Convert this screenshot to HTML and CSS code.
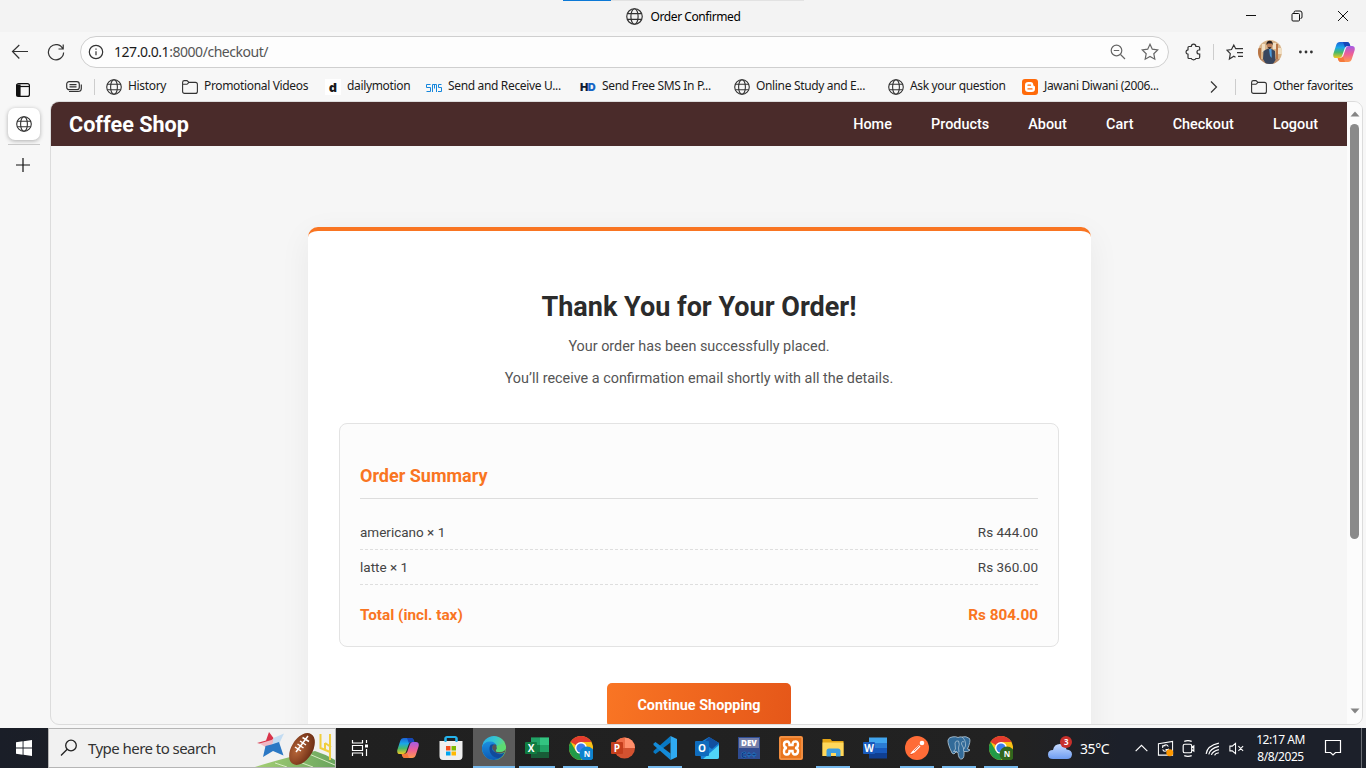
FILE: index.html
```html
<!DOCTYPE html>
<html lang="en">
<head>
<meta charset="utf-8">
<title>Order Confirmed</title>
<link rel="stylesheet" href="styles.css">
</head>
<body>
<svg class="defs" aria-hidden="true">
  <defs>
    <linearGradient id="cpA" x1="0" y1="0" x2="0" y2="1"><stop offset="0" stop-color="#1b62d8"/><stop offset=".35" stop-color="#1aa6e8"/><stop offset=".65" stop-color="#48b96a"/><stop offset="1" stop-color="#f4c81f"/></linearGradient>
    <linearGradient id="cpB" x1="0" y1="0" x2="0" y2="1"><stop offset="0" stop-color="#a45be6"/><stop offset=".5" stop-color="#ee5f96"/><stop offset="1" stop-color="#ff9a4d"/></linearGradient>
    <linearGradient id="edA" x1="0" y1="0" x2="1" y2=".5"><stop offset="0" stop-color="#28a8e8"/><stop offset=".5" stop-color="#35c7d0"/><stop offset="1" stop-color="#70e05a"/></linearGradient>
    <linearGradient id="edB" x1="0" y1="0" x2="0" y2="1"><stop offset="0" stop-color="#1b8ede"/><stop offset="1" stop-color="#0d5ab5"/></linearGradient>
    <linearGradient id="cloudG" x1="0" y1="0" x2="0" y2="1"><stop offset="0" stop-color="#c6dbff"/><stop offset="1" stop-color="#6e9cf0"/></linearGradient>
    <radialGradient id="ballG" cx=".4" cy=".35" r=".7"><stop offset="0" stop-color="#b9683a"/><stop offset="1" stop-color="#6b2c14"/></radialGradient>
    <linearGradient id="fieldG" x1="0" y1="0" x2="1" y2="0"><stop offset="0" stop-color="#a4cf74"/><stop offset="1" stop-color="#6aa55e"/></linearGradient>
    <symbol id="globe" viewBox="0 0 16 16"><g fill="none" stroke="currentColor" stroke-width="1.1"><circle cx="8" cy="8" r="7.3"/><ellipse cx="8" cy="8" rx="3.4" ry="7.3"/><path d="M1.3 5.3h13.4M1.3 10.7h13.4"/></g></symbol>
    <symbol id="folder" viewBox="0 0 16 16"><path d="M.6 4V3.4Q.6 1.6 2.4 1.6H5L7 3.4H13.4Q15.4 3.4 15.4 5.4V12.4Q15.4 14.4 13.4 14.4H2.6Q.6 14.4 .6 12.4ZM.8 5.3H5L7 3.4" fill="none" stroke="currentColor" stroke-width="1.1"/></symbol>
    <symbol id="copilot" viewBox="0 0 22 20"><path d="M7 0H14Q16 0 16.7 2L17.3 4H14.5Q12.5 4 11.8 6L9 14Q8.300 16 6.300 16H3Q-.3 16 .3 12L3.200 3Q4 0 7 0Z" fill="url(#cpA)"/><path d="M15 20H8Q6 20 5.300 18L4.700 16H7.500Q9.500 16 10.200 14L13 6Q13.700 4 15.700 4H19Q22.300 4 21.700 8L18.800 17Q18 20 15 20Z" fill="url(#cpB)"/><path d="M10 0H14Q16 0 16.700 2L17.300 4H14.500Q12.800 4 12 5.400Z" fill="#1646b8"/><path d="M4.700 16H7.500Q9.200 16 10 14.600L12 20H8Q6 20 5.300 18Z" fill="#f5793b"/></symbol>
    <symbol id="chrome" viewBox="0 0 24 24"><circle cx="12" cy="12" r="12" fill="#fbc116"/><path d="M12 12L1.600 6A12 12 0 0 1 22.400 6Z" fill="#e33b2e"/><path d="M12 24A12 12 0 0 1 1.600 6L6.800 15 12 17.500 16 15Z" fill="#229a48"/><path d="M12 6H22.400L17 15Z" fill="#fbc116"/><circle cx="12" cy="12" r="6" fill="#fff"/><circle cx="12" cy="12" r="4.600" fill="#3b7ded"/></symbol>
  </defs>
</svg>

<div class="screen">
  <header class="titlebar">
    <div class="loadbar"></div>
    <div class="tab-title"><svg class="i16"><use href="#globe"/></svg><span class="tt">Order Confirmed</span></div>
    <div class="win-btns">
      <svg viewBox="0 0 12 12"><path d="M1 5.500H11" /></svg>
      <svg viewBox="0 0 12 12"><path d="M3 3V2.500Q3 1 4.500 1H9Q11 1 11 3V7Q11 8.500 9.500 8.500M2 3.500H7.500Q8.500 3.500 8.500 4.500V10Q8.500 11 7.500 11H2Q1 11 1 10V4.500Q1 3.500 2 3.500"/></svg>
      <svg viewBox="0 0 12 12"><path d="M1 1L11 11M11 1L1 11"/></svg>
    </div>
  </header>

  <div class="toolbar">
    <svg class="back" viewBox="0 0 18 16"><path d="M17 7.500H1.500M8.300 1L1.500 7.500 8.300 14.500"/></svg>
    <svg class="reload" viewBox="0 0 18 18"><path d="M15.900 6A7.600 7.600 0 1 0 16.600 9.500M16.200 1.500V6H11.500"/></svg>
    <div class="address">
      <svg class="info" viewBox="0 0 16 16"><circle cx="8" cy="8" r="6.700"/><path d="M8 7.200V11.200M8 4.600V5.800"/></svg>
      <span class="url">127.0.0.1<span class="dim">:8000/checkout/</span></span>
      <svg class="mag" viewBox="0 0 16 16"><circle cx="6.500" cy="6.500" r="5.300"/><path d="M10.500 10.500L15 15M3.800 6.500H9.200"/></svg>
      <svg class="fav" viewBox="0 0 18 18"><path d="M9 1.300L11.300 6.200 16.700 6.900 12.800 10.700 13.800 16.200 9 13.500 4.200 16.200 5.200 10.700 1.300 6.900 6.700 6.200Z"/></svg>
    </div>
    <svg class="puzzle" viewBox="0 0 18 18"><path d="M4 3.500H6.300Q6.500 1.200 8.600 1.200T10.900 3.500H13.200Q14.700 3.500 14.700 5V7H14Q12 7 12 9T14 11H14.700V14Q14.700 15.500 13.200 15.500H10.900Q10.700 16.800 8.600 16.800T6.300 15.500H4Q3 15.500 3 14.500V11.200Q1 11 1 9T3 6.800V4.500Q3 3.500 4 3.500Z"/></svg>
    <i class="vsep"></i>
    <svg class="favlist" viewBox="0 0 18 18"><path d="M9.500 14.200L7.800 13.300 3.400 16 4.300 10.700 1 7.200 5.500 6.500 7.800 2 9.700 5.700H17M11 9.600H17M12 13.400H17"/></svg>
    <svg class="avatar" viewBox="0 0 24 24"><defs><clipPath id="av"><circle cx="12" cy="12" r="12"/></clipPath></defs><g clip-path="url(#av)"><path fill="#d9b58a" d="M0 0H24V24H0Z"/><path fill="#b87545" d="M0 8H3V24H0ZM18 4H20V20H18Z"/><path fill="#f1dfc4" d="M4 4H7V12H4ZM20 8H24V14H20ZM15 3H18V9H15Z"/><path fill="#b98a68" d="M0 19H24V24H0Z"/><path fill="#39465e" d="M5.500 11L10 8.500H13L17 11 17.500 20 15 24H8L5 19Z"/><path fill="#4c9bdb" d="M11 9H13.500L13.800 18 12 16Z"/><circle cx="11.600" cy="5.500" r="2.700" fill="#bd805a"/><path fill="#28201e" d="M8.500 5Q8 1 11.500.7T14.700 5L13.500 3.500H10ZM9.500 7.200H13.700L11.600 9Z"/></g></svg>
    <svg class="dots" viewBox="0 0 16 4"><circle cx="2.400" cy="2" r="1.400"/><circle cx="8" cy="2" r="1.400"/><circle cx="13.400" cy="2" r="1.400"/></svg>
    <svg class="cop"><use href="#copilot"/></svg>
  </div>

  <div class="browser-body">
    <aside class="vtabs">
      <svg class="panel" viewBox="0 0 16 16"><rect x="1.600" y="1.600" width="12.800" height="12.800" rx="2"/><path d="M2 4.500H14" /><path d="M2 3H5V14H2Z" class="fill"/></svg>
      <div class="vtab"><svg class="i16"><use href="#globe"/></svg></div>
      <i class="hsep"></i>
      <svg class="plus" viewBox="0 0 16 16"><path d="M8 1V15M1 8H15"/></svg>
    </aside>
    <div class="main">
      <nav class="bookmarks">
        <svg class="tray" viewBox="0 0 18 14"><rect x="1.700" y="1.700" width="12.600" height="8" rx="2.500"/><path d="M4.500 4.700H11.500M4.500 6.900H11.500M4 11.500H13Q16.300 11.500 16.300 8.500V4.500"/></svg>
        <i class="vsep bsep"></i>
        <a class="bm w76"><svg class="i16"><use href="#globe"/></svg><span>History</span></a>
        <a class="bm w143"><svg class="i16"><use href="#folder"/></svg><span>Promotional Videos</span></a>
        <a class="bm w101"><b class="dm">d</b><span>dailymotion</span></a>
        <a class="bm w154"><svg class="i16" viewBox="0 0 16 16"><path d="M4.500 5.500H.5V8.500H4.500V12.500H.5M6.500 13V5.500H10.500V13M8.500 5.500V9.500M15.500 5.500H12.500V8.500H15.500V12.500H12" fill="none" stroke="#1687dc"/></svg><span>Send and Receive U...</span></a>
        <a class="bm w154"><b class="hd">H<em>D</em></b><span>Send Free SMS In P...</span></a>
        <a class="bm w154"><svg class="i16"><use href="#globe"/></svg><span>Online Study and E...</span></a>
        <a class="bm w134"><svg class="i16"><use href="#globe"/></svg><span>Ask your question</span></a>
        <a class="bm w188"><svg class="i16" viewBox="0 0 16 16"><rect width="16" height="16" rx="3" fill="#ff6a0a"/><path d="M6.300 3H8.500Q11.300 3 11.300 6 11.500 7 12.300 7 13 7.200 13 8V9.700Q13 13 9.700 13H6.300Q3 13 3 9.700V6.300Q3 3 6.300 3Z" fill="#fff"/><path d="M6 6.200H8.500M6 9.900H10" stroke="#ff6a0a" stroke-width="1.300" stroke-linecap="round"/></svg><span>Jawani Diwani (2006...</span></a>
        <svg class="chev" viewBox="0 0 8 14"><path d="M1 1.500L6.500 7 1 12.500"/></svg>
        <i class="vsep csep"></i>
        <a class="bm"><svg class="i16"><use href="#folder"/></svg><span>Other favorites</span></a>
      </nav>

      <div class="viewport">
        <div class="page">
          <div class="shopbar">
            <div class="brand">Coffee Shop</div>
            <nav class="links"><a>Home</a><a>Products</a><a>About</a><a>Cart</a><a>Checkout</a><a>Logout</a></nav>
          </div>
          <section class="card">
            <h1>Thank You for Your Order!</h1>
            <p>Your order has been successfully placed.</p>
            <p>You’ll receive a confirmation email shortly with all the details.</p>
            <div class="summary">
              <h2>Order Summary</h2>
              <div class="row"><span>americano × 1</span><span>Rs 444.00</span></div>
              <div class="row"><span>latte × 1</span><span>Rs 360.00</span></div>
              <div class="total"><span>Total (incl. tax)</span><span>Rs 804.00</span></div>
            </div>
            <a class="btn">Continue Shopping</a>
          </section>
        </div>
        <div class="scroll">
          <svg viewBox="0 0 10 6"><path d="M5 .5L9.500 5.500H.5Z"/></svg>
          <i class="thumb"></i>
          <svg class="down" viewBox="0 0 10 6"><path d="M5 5.500L9.500 .5H.5Z"/></svg>
        </div>
      </div>
    </div>
  </div>

  <footer class="taskbar">
    <div class="start"><svg viewBox="0 0 16 16"><path d="M0 2.300L6.600 1.300V7.500H0ZM7.500 1.200L16 0V7.500H7.500ZM0 8.500H6.600V14.700L0 13.700ZM7.500 8.500H16V16L7.500 14.800Z" fill="#fff"/></svg></div>
    <div class="search">
      <svg class="lens" viewBox="0 0 18 18"><circle cx="11" cy="6.500" r="5.300"/><path d="M7.200 10.300L1 16.500"/></svg>
      <span>Type here to search</span>
      <svg class="sport" viewBox="0 0 80 38"><path d="M0 38Q25 30 60 22Q70 25 80 31V38Z" fill="url(#fieldG)"/><path d="M20 34L32 38M36 30L58 38M54 25L80 36" stroke="#d6ebc0" stroke-width="1"/><path d="M14 3L18.500 9 16.500 17 2 14 11 11.500Z" fill="#d8344a"/><path d="M18.500 9L29 4.500 24 15 16.500 17Z" fill="#c3dcf2"/><path d="M4.500 14.500L16.500 11 18.500 9.500 17 16 10.500 18Z" fill="#f0b9c4"/><path d="M24 13L28.500 26.500 18 22 8 28 10.500 17 16.500 15.500Z" fill="#2b78c4"/><ellipse cx="47" cy="20" rx="17.500" ry="10.500" transform="rotate(-58 47 20)" fill="url(#ballG)"/><path d="M41 23L53 7M40 18L46 22M42.500 15L48.500 19M45 12L51 16M47.500 8.500L54 12.500" stroke="#fff" stroke-width="1.500"/><path d="M65.500 5V19L75 23M70 14V21M75 5V31M70 14L76 18" fill="none" stroke="#f0ce3e" stroke-width="2"/></svg>
    </div>
    <div class="view"><svg viewBox="0 0 18 18"><path d="M1.500 1V4H11.500V1M1.500 6.500H11.500V11.500H1.500ZM1.500 17V14H11.500V17M15.500 1V4M15.500 10V17"/><path d="M14 5.500H17V8.500H14Z" class="w"/></svg></div>
    <div class="apps">
      <div class="app a43"><svg class="cpbig"><use href="#copilot"/></svg></div>
      <div class="app a43"><svg viewBox="0 0 24 24"><path d="M6.500 7V2.500Q6.500 1 8 1H16Q17.500 1 17.500 2.500V7" fill="none" stroke="#25b4ed" stroke-width="2"/><path d="M.5 5H23.500V20Q23.500 24 20 24H4Q.5 24 .5 20Z" fill="#efefef"/><path d="M6.500 1.500V6M17.500 1.500V6" stroke="#25b4ed" stroke-width="2"/><path d="M7 10H11.500V14.500H7Z" fill="#f25022"/><path d="M12.500 10H17V14.500H12.500Z" fill="#7fba00"/><path d="M7 15.500H11.500V19.500H7Z" fill="#00a4ef"/><path d="M12.500 15.500H17V19.500H12.500Z" fill="#ffb900"/></svg></div>
      <div class="app active"><svg viewBox="0 0 24 24"><circle cx="12" cy="12" r="12" fill="url(#edA)"/><path d="M0 11Q2 5.500 8 5.500Q14 5.500 15 11Q15 13 13.800 14.300Q13 16 16 17Q19.500 18 22.800 16.500Q19 24 12 24A12 12 0 0 1 0 11Z" fill="url(#edB)"/><path d="M8.500 9Q6 13 9 18Q11.500 22 17 22Q20 21 22.800 16.500Q17 20 13.800 16.500Q9.500 15 10 11.500Q10.500 9.300 12.300 8.500Q10 8 8.500 9Z" fill="#114a9a"/><path d="M13.900 14.200Q15.300 12.500 14.800 10.500Q14 8 12.300 8.400Q10.500 9 10.100 11Q9.900 13.500 12.500 15.600Q14 17.500 18 17.600L22.900 16.300L24 12Q23 15.500 18 15.800Q13 15.800 13.900 14.200Z" fill="#555"/><path d="M14.500 10Q15.500 13 14 14.400Q14 16 18 15.900Q23.500 15.500 24 11L20 8Z" fill="#5bdc72"/></svg></div>
      <div class="app a44 on"><svg viewBox="0 0 24 24"><path d="M6 1.500H24V22H6Z" fill="#185c37"/><path d="M6 1.500H15V9H6Z" fill="#21a366"/><path d="M15 1.500H24V9H15Z" fill="#33c481"/><path d="M15 9H24V16H15Z" fill="#21a366"/><path d="M6 9H15V16H6Z" fill="#107c41"/><rect y="6" width="12" height="12" rx="1" fill="#107c41"/><text x="6" y="15.500" class="tile">X</text></svg></div>
      <div class="app a43 on"><svg viewBox="0 0 24 24"><use href="#chrome" width="24" height="24"/><circle cx="18" cy="18" r="7.500" fill="#0d83ce"/><text x="18" y="21" class="pn">N</text></svg></div>
      <div class="app"><svg viewBox="0 0 24 24"><circle cx="13.500" cy="12" r="10.500" fill="#d35230"/><path d="M13.500 1.500A10.500 10.500 0 0 1 24 12H13.500Z" fill="#ff8f6b"/><path d="M13.500 1.500V12H3A10.500 10.500 0 0 1 13.500 1.500" fill="#ed6c47"/><rect y="6" width="12" height="12" rx="1" fill="#c43e1c"/><text x="6" y="15.500" class="tile">P</text></svg></div>
      <div class="app on"><svg viewBox="0 0 24 24"><path d="M17.500 6.500L2.500 18 .5 16.500V15L17.500 0Z" fill="#0879c4"/><path d="M17.500 17.500L2.500 6 .5 7.500V9L17.500 24Z" fill="#148bd8"/><path d="M17.500 0L24 3V21L17.500 24Z" fill="#2faaf2"/></svg></div>
      <div class="app"><svg viewBox="0 0 24 24"><path d="M4 7L14 1 24 7V21Q24 23 22 23H6Z" fill="#1683d8"/><path d="M14 1L24 7 17 13 8 7Z" fill="#124f9f"/><path d="M24 9V21Q24 23 22 23H8Z" fill="#50d4f6"/><rect y="5" width="14" height="15" rx="1" fill="#0f6cbd"/><text x="7" y="16" class="tile">O</text></svg></div>
      <div class="app"><svg viewBox="0 0 24 24"><path d="M1 1H23V23H1Z" fill="#2e4b91"/><path d="M2 2H22V12H2Z" fill="#747fa8"/><text x="12" y="10" class="dev">DEV</text><text x="12" y="22" class="cpp">C++</text></svg></div>
      <div class="app"><svg viewBox="0 0 24 24"><rect width="24" height="24" rx="2" fill="#e9751d"/><rect x="1" y="1" width="22" height="22" rx="1" fill="none" stroke="#f7a664"/><path d="M8 5.500Q5 5.500 5 8.500T8 12Q5 12 5 15.500T8 18.500Q10.500 18.500 10.500 15H13.500Q13.500 18.500 16 18.500T19 15.500T16 12Q19 12 19 8.500T16 5.500Q13.500 5.500 13.500 9H10.500Q10.500 5.500 8 5.500Z" fill="none" stroke="#fff" stroke-width="2.400"/></svg></div>
      <div class="app on"><svg viewBox="0 0 24 24"><path d="M1.500 3H9.500L11 5H22.500V20H1.500Z" fill="#e5a515"/><path d="M1.500 6.500H22.500V20H1.500Z" fill="#ffd85c"/><path d="M5.500 20V15Q5.500 12.500 8 12.500H17Q19.500 12.500 19.500 15V20.500H15V17H10V20.500H5.500Z" fill="#3d9de0"/></svg></div>
      <div class="app"><svg viewBox="0 0 24 24"><path d="M6 1.500H24V7H6Z" fill="#41a5ee"/><path d="M6 7H24V12H6Z" fill="#2b7cd3"/><path d="M6 12H24V17H6Z" fill="#185abd"/><path d="M6 17H24V22.500H6Z" fill="#103f91"/><rect y="6" width="12" height="12" rx="1" fill="#185abd"/><text x="6" y="15.500" class="tile">W</text></svg></div>
      <div class="app on"><svg viewBox="0 0 24 24"><circle cx="12" cy="12" r="12" fill="#ff6c37"/><path d="M5 18.500L7 15.500 14 9 15.500 10.500 9.500 16.500Z" fill="#fff"/><circle cx="17" cy="7" r="2.300" fill="#fff"/><path d="M9 15L14.500 9.500M5 18.500H8" stroke="#d9481e" stroke-width=".7"/></svg></div>
      <div class="app on"><svg viewBox="0 0 24 24"><path d="M6 .8Q9 .3 11 1.500Q13 .5 15 1Q19-.3 22.500 2.500Q24 5 20.500 13L23 14Q21 16.500 17 15.500Q17.500 22 15 23Q11.500 24 11 16.500L9 16Q7 19.500 5 17Q.5 8 1 4Q2 .8 6 .8Z" fill="#326b99" stroke="#b9ccd9" stroke-width=".8"/><path d="M8 7Q9 4 11.500 5Q13 8 11.500 12L12 16M8 7L8.500 13 6.500 15.500H10M15 1Q19 4 18.500 10L17 13M17 6Q14.500 4.500 14.500 8L16.500 12V15.500" fill="none" stroke="#b9ccd9" stroke-width=".7"/></svg></div>
      <div class="app on"><svg viewBox="0 0 24 24"><use href="#chrome" width="24" height="24"/><circle cx="18" cy="18" r="7.500" fill="#32671d"/><text x="18" y="21" class="pn">N</text></svg></div>
    </div>
    <div class="weather"><svg viewBox="0 0 26 26"><path d="M6 24Q1 24 1 19.500T6 15Q7 9 13 9Q18.500 9 19.500 14.500Q25 15 25 19.500Q24.500 24 20 24Z" fill="url(#cloudG)"/><circle cx="19" cy="7" r="6" fill="#c8302b"/><text x="19" y="10" class="pn">3</text></svg><span>35°C</span></div>
    <div class="tray-icons">
      <svg viewBox="0 0 16 16"><path d="M2.500 10.500L8 5 13.500 10.500"/></svg>
      <svg viewBox="0 0 18 18"><path d="M1.500 4L16.500 1.500V16H1.500ZM9 6H6V8.500M6 7Q10 3 12 7M6 10Q8 14 12 10V12M12 10H9"/><circle cx="13.500" cy="13.500" r="3.700" class="or"/></svg>
      <svg viewBox="0 0 16 16"><path d="M4.500 4H9.500Q11 4 11 5.500V10.500Q11 12 9.500 12H4.500Q3 12 3 10.500V5.500Q3 4 4.500 4ZM11 7L13 5.500V10.500L11 9M4 1.300Q7.500-.2 11 1.300M4 14.700Q7.500 16.200 11 14.700"/></svg>
      <svg viewBox="0 0 16 16"><path d="M2 13Q3 5.500 14 3M4.500 13.500Q5.500 8 14 6M7 14Q8 10.500 14 9M10 14.500Q10.500 12.500 14 12"/></svg>
      <svg viewBox="0 0 18 18"><path d="M2 6.500H4.500L8 3.500V14.500L4.500 11.500H2ZM11 6.500L16 11.500M16 6.500L11 11.500"/></svg>
    </div>
    <div class="clock"><span>12:17 AM</span><span>8/8/2025</span></div>
    <svg class="notif" viewBox="0 0 18 18"><path d="M1.500 1.500H16.500V13.500H11.500L9 16 6.500 13.500H1.500Z"/></svg>
    <i class="peek"></i>
  </footer>
</div>
</body>
</html>
```

FILE: styles.css
```css
* { box-sizing: border-box; }
body { margin: 0; font-family: "Noto Sans", "Open Sans", sans-serif; color: #1b1b1b; overflow: hidden; }
svg { display: block; flex: none; }
i { display: block; flex: none; }
.defs { position: absolute; width: 0; height: 0; }
.i16 { width: 16px; height: 16px; color: #333; }
.screen { width: 1366px; height: 768px; display: flex; flex-direction: column; background: #f7f7f7; }

.titlebar { height: 32px; background: #f3f3f3; position: relative; display: flex; justify-content: center; align-items: center; }
.loadbar { position: absolute; left: 563px; top: 0; width: 241px; height: 1px; background: linear-gradient(90deg, #0b78d6 48px, #e2e2e2 48px); }
.tab-title { display: flex; gap: 8px; align-items: center; font-size: 12px; color: #000; letter-spacing: -.42px; }
.tab-title svg { width: 17px; height: 17px; }
.win-btns { position: absolute; right: 17px; top: 10px; display: flex; gap: 34px; }
.win-btns svg { width: 12px; height: 12px; fill: none; stroke: #111; stroke-width: 1; }

.toolbar { height: 40px; display: flex; align-items: center; padding-left: 11px; }
.toolbar svg { fill: none; stroke: #333; stroke-width: 1.2; }
.back { width: 18px; height: 16px; }
.reload { width: 18px; height: 18px; margin-left: 18px; }
.address { width: 1089px; height: 32px; margin-left: 15px; border: 1px solid #cfcfcf; border-radius: 16px; background: #fdfdfd; display: flex; align-items: center; padding: 0 9px 0 7px; }
.address .info { width: 16px; height: 16px; }
.address .mag { width: 16px; height: 16px; margin-left: auto; stroke: #666; }
.address .fav { width: 18px; height: 18px; margin-left: 15px; stroke: #666; }
.url { margin-left: 10px; font-size: 14px; line-height: 20px; letter-spacing: -0.46px; }
.dim { color: #555; }
.toolbar .puzzle { width: 18px; height: 18px; margin-left: 16px; }
.vsep { width: 1px; height: 16px; background: #cdcdcd; }
.toolbar .vsep { margin-left: 10px; }
.toolbar .favlist { width: 18px; height: 18px; margin-left: 12px; }
.toolbar .avatar { width: 24px; height: 24px; margin-left: 14px; stroke: none; }
.toolbar .dots { width: 16px; height: 4px; margin-left: 16px; fill: #333; stroke: none; }
.toolbar .cop { width: 22px; height: 20px; margin-left: 19px; stroke: none; }

.browser-body { height: 656px; display: flex; }
.vtabs { width: 50px; display: flex; flex-direction: column; align-items: center; padding: 10px 4px 0 0; }
.vtabs svg { stroke: #111; fill: none; stroke-width: 1.2; }
.panel { width: 16px; height: 16px; }
.vtabs .panel .fill { fill: #111; }
.vtab { width: 32px; height: 32px; margin: 10px 0 0 2px; background: #fff; border-radius: 7px; box-shadow: 0 1px 4px rgba(0,0,0,.3); display: flex; align-items: center; justify-content: center; }
.vtab svg { stroke: none; }
.hsep { width: 32px; height: 1px; margin: 4px 0 0 2px; background: #c9c9c9; }
.plus { width: 16px; height: 16px; margin-top: 12px; }
.main { width: 1316px; display: flex; flex-direction: column; }

.bookmarks { height: 29px; display: flex; align-items: center; padding-left: 15px; }
.tray { width: 18px; height: 14px; fill: none; stroke: #333; stroke-width: 1.2; }
.bsep { margin: 0 11px; }
.bm { display: flex; align-items: center; gap: 6px; font-size: 12px; line-height: 16px; white-space: nowrap; flex: none; }
.bm span { letter-spacing: -.34px; margin-top: -1px; }
.w76 { width: 76px; } .w143 { width: 143px; } .w101 { width: 101px; } .w154 { width: 154px; } .w134 { width: 134px; } .w188 { width: 188px; }
.dm { width: 16px; height: 16px; background: #fff; font: 900 13px/16px "Open Sans", sans-serif; text-align: center; }
.hd { width: 16px; font: 900 11px/16px "Inter", sans-serif; letter-spacing: -.5px; color: #111b33; }
.hd em { color: #1666c5; font-style: normal; }
.chev { width: 8px; height: 14px; fill: none; stroke: #333; stroke-width: 1.2; }
.csep { margin: 0 15px 0 17px; }

.viewport { height: 624px; border: 1px solid #dcdcdc; border-radius: 9px; overflow: hidden; width: 1313px; display: flex; background: #f6f6f6; }
.page { width: 1296px; font-family: Roboto, sans-serif; display: flex; flex-direction: column; align-items: center; flex: none; overflow: hidden; }
.shopbar { width: 100%; height: 44px; background: #4a2b2a; display: flex; justify-content: space-between; align-items: center; padding: 0 29px 0 18px; flex: none; color: #fff; }
.brand { font-size: 21.600px; font-weight: 700; }
.links { display: flex; gap: 39.200px; font-size: 14.400px; font-weight: 500; }
.card { width: 783px; height: 560px; margin-top: 81px; padding: 59px 31px 0; background: #fff; border-top: 4px solid #f97522; border-radius: 10px; box-shadow: 0 8px 32px rgba(0,0,0,.06); display: flex; flex-direction: column; align-items: center; flex: none; }
.card h1 { margin: 0; font-size: 27px; line-height: 34px; color: #2b2b2b; }
.card p { margin: 11px 0 0; font-size: 14.400px; line-height: 21px; color: #555; }
.card h1 + p { margin-top: 12px; }
.summary { width: 720px; height: 224px; margin-top: 34px; border: 1px solid #e3e3e3; border-radius: 8px; background: #fcfcfc; padding: 40px 20px 0; }
.summary h2 { margin: 0 0 16px; height: 35px; font-size: 18px; line-height: 24px; color: #f97522; border-bottom: 1px solid #ddd; }
.row { height: 35px; display: flex; justify-content: space-between; align-items: center; border-bottom: 1px dashed #dedede; font-size: 13.500px; color: #444; }
.total { margin-top: 20px; display: flex; justify-content: space-between; font-size: 15.300px; font-weight: 700; line-height: 20px; color: #f97522; }
.btn { width: 184px; height: 44px; margin-top: 36px; border-radius: 5px; background: linear-gradient(100deg, #f97524, #e55719); color: #fff; font-size: 14.400px; font-weight: 700; line-height: 45px; text-align: center; }
.scroll { width: 15px; background: #fcfcfc; display: flex; flex-direction: column; align-items: center; padding-top: 9px; }
.scroll svg { width: 10px; height: 6px; fill: #858585; }
.thumb { width: 9px; height: 415px; margin-top: 7px; border-radius: 5px; background: #8a8a8a; }
.scroll .down { margin-top: 169px; }

.taskbar { height: 40px; background: linear-gradient(90deg, #1a1e28 0, #202020 336px, #222 1020px, #1c202a 1120px, #1c202a); display: flex; color: #fff; }
.start { width: 48px; display: flex; align-items: center; justify-content: center; }
.start svg { width: 16px; height: 16px; }
.search { width: 288px; background: #f1f1f1; border: 1px solid #b5b5b5; display: flex; align-items: center; padding-left: 11px; font-size: 15px; color: #333; }
.search span { margin-left: 10px; white-space: nowrap; letter-spacing: -.55px; width: 128px; }
.lens { width: 18px; height: 18px; fill: none; stroke: #222; stroke-width: 1.300; }
.sport { width: 80px; height: 38px; margin-left: auto; }
.view { width: 50px; display: flex; align-items: center; justify-content: center; padding-right: 2px; }
.view svg { width: 18px; height: 18px; fill: none; stroke: #fff; stroke-width: 1.200; }
.view .w { fill: #fff; stroke: none; }
.apps { display: flex; width: 636px; }
.app { width: 42px; display: flex; align-items: center; justify-content: center; position: relative; }
.a43 { width: 43px; } .a44 { width: 44px; }
.active { margin-left: 1px; }
.app svg { width: 24px; height: 24px; }
.app .cpbig { width: 22px; height: 20px; }
.active { background: #5b5b5b; }
.active::after, .on::after { content: ""; position: absolute; bottom: 0; left: 4px; right: 4px; height: 2px; background: #76b9ed; }
.active::after { left: 0; right: 0; }
.tile { font: 700 10px "Open Sans", sans-serif; fill: #fff; text-anchor: middle; }
.pn { font: 700 8px "Open Sans", sans-serif; fill: #fff; text-anchor: middle; }
.dev { font: 800 8px "Open Sans", sans-serif; fill: #fff; text-anchor: middle; }
.cpp { font: 800 8px "Open Sans", sans-serif; fill: #0d2766; stroke: #2582d1; stroke-width: .5px; text-anchor: middle; letter-spacing: .5px; }
.weather { width: 111px; display: flex; align-items: center; padding-left: 25px; gap: 7px; font-size: 14px; letter-spacing: -.4px; }
.weather svg { width: 26px; height: 26px; }
.tray-icons { display: flex; align-items: center; width: 117px; gap: 6.700px; }
.tray-icons svg { width: 17px; height: 17px; fill: none; stroke: #fff; stroke-width: 1.100; }
.tray-icons .or { fill: #ff9800; stroke: none; }
.clock { width: 61px; display: flex; flex-direction: column; align-items: center; font-size: 12px; line-height: 17px; padding-top: 3px; letter-spacing: -.45px; white-space: nowrap; }
.notif { width: 18px; height: 18px; margin: 11px 0 0 13px; fill: none; stroke: #fff; stroke-width: 1.200; }
.peek { width: 1px; height: 40px; margin-left: 19px; background: #6a6d74; }
```
